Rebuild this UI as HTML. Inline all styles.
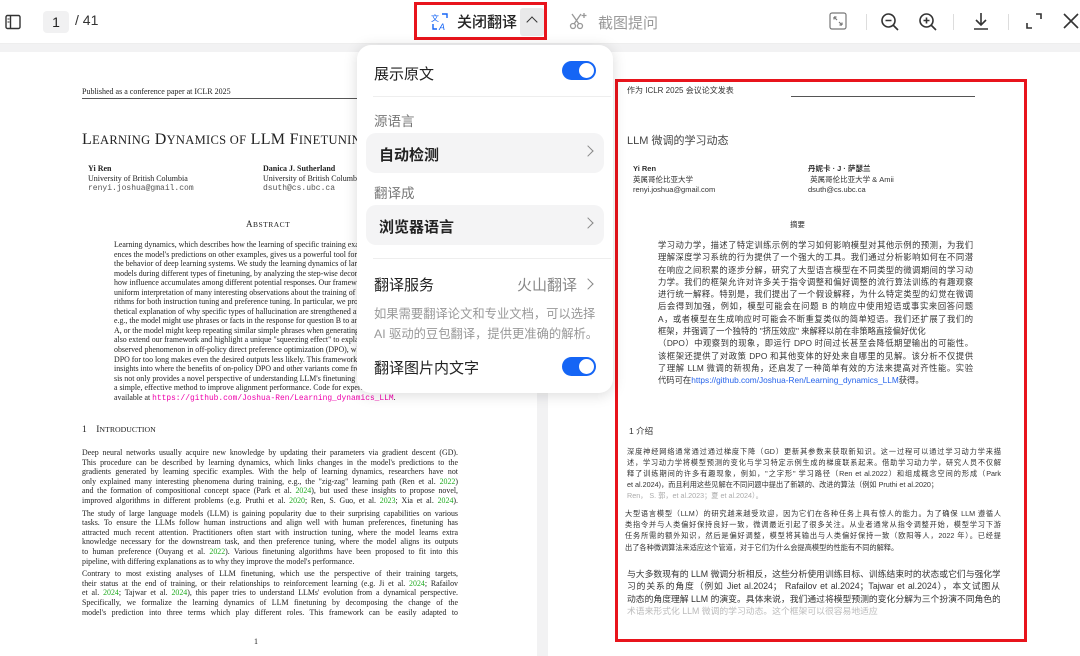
<!DOCTYPE html>
<html><head><meta charset="utf-8">
<style>
*{margin:0;padding:0;box-sizing:border-box}
html{width:1080px;height:656px;overflow:hidden}
body{width:1080px;height:656px;overflow:hidden;background:#f2f2f3;font-family:"Liberation Sans","Noto Sans CJK SC",sans-serif;position:relative;color:#222}
.abs{position:absolute}
.tb{position:absolute;left:0;top:0;width:1080px;height:44px;background:#fff;border-bottom:1px solid #eee}
.pg{position:absolute;background:#fff;overflow:hidden}
.ser{font-family:"Liberation Serif","Noto Serif CJK SC",serif;color:#222}
.mono{font-family:"Liberation Mono",monospace}
.l{position:relative;white-space:nowrap;text-align:justify;text-align-last:justify;overflow:hidden}
.g{color:#2a2}
.pk{color:#e0a}
.cn{font-family:"Liberation Sans","Noto Sans CJK SC",sans-serif;color:#333}
.pop{position:absolute;left:357px;top:45px;width:256px;height:348px;background:#fff;border-radius:14px;box-shadow:0 2px 14px rgba(0,0,0,.15)}
.tog{position:absolute;width:34px;height:19px;border-radius:10px;background:#1565f5}
.tog::after{content:"";position:absolute;right:2px;top:2px;width:15px;height:15px;border-radius:50%;background:#fff}
.row{position:absolute;left:9px;width:238px;height:40px;border-radius:10px;background:#f4f4f5;font-size:15px;font-weight:bold;color:#222;padding:11px 0 0 13px}
.chev{position:absolute;right:12px;top:14px;width:8px;height:8px;border-right:1.5px solid #888;border-top:1.5px solid #888;transform:rotate(45deg)}
</style></head><body>

<div class="tb">
  <svg class="abs" style="left:5px;top:14px" width="16" height="16" viewBox="0 0 16 16"><rect x="1" y="1.5" width="14" height="13" rx="1.5" fill="none" stroke="#333" stroke-width="1.4"/><line x1="5.5" y1="2" x2="5.5" y2="14" stroke="#333" stroke-width="1.4"/><line x1="2.5" y1="5" x2="4.5" y2="5" stroke="#333"/><line x1="2.5" y1="8" x2="4.5" y2="8" stroke="#333"/></svg>
  <div class="abs" style="left:43px;top:11px;width:26px;height:22px;background:#f1f1f2;border-radius:4px;font-size:14px;text-align:center;line-height:22px">1</div>
  <div class="abs" style="left:75px;top:12px;font-size:14px;color:#333">/ 41</div>
  <div class="abs" style="left:414px;top:2px;width:133px;height:38px;border:3px solid #e8141c"></div>
  <svg class="abs" style="left:430px;top:12px" width="20" height="20" viewBox="0 0 20 20"><text x="1" y="9" font-size="8" fill="#1565f5" font-family="Noto Sans CJK SC">文</text><text x="9" y="18" font-size="9" fill="#1565f5" font-family="Liberation Sans" font-style="italic">A</text><path d="M12 2h5v4M3 12v5h4" fill="none" stroke="#1565f5" stroke-width="1.4"/></svg>
  <div class="abs" style="left:457px;top:11px;font-size:15px;color:#222;font-weight:500">关闭翻译</div>
  <div class="abs" style="left:520px;top:8px;width:24px;height:28px;background:#e9e9ea;border-radius:3px"></div>
  <div class="abs" style="left:528px;top:18px;width:8px;height:8px;border-left:1.6px solid #333;border-top:1.6px solid #333;transform:rotate(45deg)"></div>
  <svg class="abs" style="left:568px;top:11px" width="20" height="20" viewBox="0 0 20 20" fill="none" stroke="#999" stroke-width="1.3"><circle cx="5" cy="15" r="2.5"/><circle cx="12" cy="15" r="2.5"/><path d="M6 13L13 3M11 13L4 3"/><path d="M16 2v5M13.5 4.5h5"/></svg>
  <div class="abs" style="left:598px;top:12px;font-size:15px;color:#999">截图提问</div>
  <svg class="abs" style="left:829px;top:12px" width="18" height="18" viewBox="0 0 18 18" fill="none" stroke="#777" stroke-width="1.2"><rect x="1" y="1" width="16" height="16" rx="2"/><path d="M5 5l3 3M5 5v2.5M5 5h2.5M13 13l-3-3M13 13v-2.5M13 13h-2.5"/></svg>
  <div class="abs" style="left:866px;top:14px;width:1px;height:16px;background:#ddd"></div>
  <svg class="abs" style="left:880px;top:12px" width="20" height="20" viewBox="0 0 20 20" fill="none" stroke="#333" stroke-width="1.6"><circle cx="8.5" cy="8.5" r="6.5"/><path d="M13 13l5 5M5.5 8.5h6"/></svg>
  <svg class="abs" style="left:918px;top:12px" width="20" height="20" viewBox="0 0 20 20" fill="none" stroke="#333" stroke-width="1.6"><circle cx="8.5" cy="8.5" r="6.5"/><path d="M13 13l5 5M5.5 8.5h6M8.5 5.5v6"/></svg>
  <div class="abs" style="left:953px;top:14px;width:1px;height:16px;background:#ddd"></div>
  <svg class="abs" style="left:971px;top:11px" width="20" height="20" viewBox="0 0 20 20" fill="none" stroke="#333" stroke-width="1.6"><path d="M10 2v12M5 9l5 5 5-5M3 18h14"/></svg>
  <div class="abs" style="left:1008px;top:14px;width:1px;height:16px;background:#ddd"></div>
  <svg class="abs" style="left:1025px;top:12px" width="18" height="18" viewBox="0 0 18 18" fill="none" stroke="#333" stroke-width="1.6"><path d="M11 2h5v5M2 11v5h5"/></svg>
  <svg class="abs" style="left:1062px;top:12px" width="18" height="18" viewBox="0 0 18 18" fill="none" stroke="#333" stroke-width="1.6"><path d="M2 2l14 14M16 2L2 16"/></svg>
</div>

<!-- left page -->
<div class="pg ser" style="left:0;top:52px;width:537px;height:604px">
  <div class="abs" style="left:82px;top:35px;font-size:8px">Published as a conference paper at ICLR 2025</div>
  <div class="abs" style="left:82px;top:46px;width:300px;height:1px;background:#555"></div>
  <div class="abs" style="left:82px;top:79px;font-size:16px;letter-spacing:.3px;white-space:nowrap">L<span style="font-size:12.5px">EARNING</span> D<span style="font-size:12.5px">YNAMICS OF</span> LLM F<span style="font-size:12.5px">INETUNING</span></div>
  <div class="abs" style="left:88px;top:112px;font-size:8px;line-height:9.6px"><b>Yi Ren</b><br>University of British Columbia<br><span class="mono" style="color:#555">renyi.joshua@gmail.com</span></div>
  <div class="abs" style="left:263px;top:112px;font-size:8px;line-height:9.6px"><b>Danica J. Sutherland</b><br>University of British Columbia<br><span class="mono" style="color:#555">dsuth@cs.ubc.ca</span></div>
  <div class="abs" style="left:246px;top:167px;font-size:9px;letter-spacing:.5px">A<span style="font-size:7.5px">BSTRACT</span></div>
  <div class="abs" style="left:114px;top:188px;font-size:7.9px;line-height:9.55px;width:343px">
    <div style="white-space:nowrap">Learning dynamics, which describes how the learning of specific training examples influ-</div>
    <div style="white-space:nowrap">ences the model's predictions on other examples, gives us a powerful tool for understanding</div>
    <div style="white-space:nowrap">the behavior of deep learning systems. We study the learning dynamics of large language</div>
    <div style="white-space:nowrap">models during different types of finetuning, by analyzing the step-wise decomposition of</div>
    <div style="white-space:nowrap">how influence accumulates among different potential responses. Our framework allows a</div>
    <div style="white-space:nowrap">uniform interpretation of many interesting observations about the training of popular algo-</div>
    <div style="white-space:nowrap">rithms for both instruction tuning and preference tuning. In particular, we propose a hypo-</div>
    <div style="white-space:nowrap">thetical explanation of why specific types of hallucination are strengthened after finetuning,</div>
    <div style="white-space:nowrap">e.g., the model might use phrases or facts in the response for question B to answer question</div>
    <div style="white-space:nowrap">A, or the model might keep repeating similar simple phrases when generating responses. We</div>
    <div style="white-space:nowrap">also extend our framework and highlight a unique "squeezing effect" to explain a previously</div>
    <div style="white-space:nowrap">observed phenomenon in off-policy direct preference optimization (DPO), where running</div>
    <div style="white-space:nowrap">DPO for too long makes even the desired outputs less likely. This framework also provides</div>
    <div style="white-space:nowrap">insights into where the benefits of on-policy DPO and other variants come from. The analy-</div>
    <div style="white-space:nowrap">sis not only provides a novel perspective of understanding LLM's finetuning but also inspires</div>
    <div style="white-space:nowrap">a simple, effective method to improve alignment performance. Code for experiments is</div>
    <div style="white-space:nowrap">available at <span class="mono pk">https://github.com/Joshua-Ren/Learning_dynamics_LLM</span>.</div>
  </div>
  <div class="abs" style="left:82px;top:373px;font-size:9.5px;white-space:nowrap">1&nbsp;&nbsp;&nbsp;&nbsp;I<span style="font-size:7.8px">NTRODUCTION</span></div>
  <div class="abs" style="left:82px;top:396px;width:376px;font-size:7.9px;line-height:9.6px">
    <div class="l">Deep neural networks usually acquire new knowledge by updating their parameters via gradient descent (GD).</div>
    <div class="l">This procedure can be described by learning dynamics, which links changes in the model's predictions to the</div>
    <div class="l">gradients generated by learning specific examples. With the help of learning dynamics, researchers have not</div>
    <div class="l">only explained many interesting phenomena during training, e.g., the "zig-zag" learning path (Ren et al. <span class="g">2022</span>)</div>
    <div class="l">and the formation of compositional concept space (Park et al. <span class="g">2024</span>), but used these insights to propose novel,</div>
    <div class="l">improved algorithms in different problems (e.g. Pruthi et al. <span class="g">2020</span>; Ren, S. Guo, et al. <span class="g">2023</span>; Xia et al. <span class="g">2024</span>).</div>
    <div style="height:3px"></div>
    <div class="l">The study of large language models (LLM) is gaining popularity due to their surprising capabilities on various</div>
    <div class="l">tasks. To ensure the LLMs follow human instructions and align well with human preferences, finetuning has</div>
    <div class="l">attracted much recent attention. Practitioners often start with instruction tuning, where the model learns extra</div>
    <div class="l">knowledge necessary for the downstream task, and then preference tuning, where the model aligns its outputs</div>
    <div class="l">to human preference (Ouyang et al. <span class="g">2022</span>). Various finetuning algorithms have been proposed to fit into this</div>
    <div style="white-space:nowrap">pipeline, with differing explanations as to why they improve the model's performance.</div>
    <div style="height:3px"></div>
    <div class="l">Contrary to most existing analyses of LLM finetuning, which use the perspective of their training targets,</div>
    <div class="l">their status at the end of training, or their relationships to reinforcement learning (e.g. Ji et al. <span class="g">2024</span>; Rafailov</div>
    <div class="l">et al. <span class="g">2024</span>; Tajwar et al. <span class="g">2024</span>), this paper tries to understand LLMs' evolution from a dynamical perspective.</div>
    <div class="l">Specifically, we formalize the learning dynamics of LLM finetuning by decomposing the change of the</div>
    <div class="l">model's prediction into three terms which play different roles. This framework can be easily adapted to</div>
  </div>
  <div class="abs" style="left:254px;top:585px;font-size:8px">1</div>
</div>

<!-- right page -->
<div class="pg" style="left:548px;top:52px;width:532px;height:604px">
  <div class="abs cn" style="left:79px;top:33px;font-size:8px">作为 ICLR 2025 会议论文发表</div>
  <div class="abs" style="left:243px;top:44px;width:184px;height:1px;background:#555"></div>
  <div class="abs cn" style="left:79px;top:80px;font-size:11px;color:#444">LLM 微调的学习动态</div>
  <div class="abs cn" style="left:85px;top:112px;font-size:7.5px;line-height:10.5px"><b>Yi Ren</b><br>英属哥伦比亚大学<br>renyi.joshua@gmail.com</div>
  <div class="abs cn" style="left:260px;top:112px;font-size:7.5px;line-height:10.5px"><b>丹妮卡 · J · 萨瑟兰</b><br>&nbsp;英属哥伦比亚大学 &amp; Amii<br>dsuth@cs.ubc.ca</div>
  <div class="abs cn" style="left:242px;top:167px;font-size:7.5px">摘要</div>
  <div class="abs cn" style="left:110px;top:187px;font-size:8.3px;line-height:12.3px;width:315px">
    <div class="l">学习动力学，描述了特定训练示例的学习如何影响模型对其他示例的预测，为我们</div>
    <div class="l">理解深度学习系统的行为提供了一个强大的工具。我们通过分析影响如何在不同潜</div>
    <div class="l">在响应之间积累的逐步分解，研究了大型语言模型在不同类型的微调期间的学习动</div>
    <div class="l">力学。我们的框架允许对许多关于指令调整和偏好调整的流行算法训练的有趣观察</div>
    <div class="l">进行统一解释。特别是，我们提出了一个假设解释，为什么特定类型的幻觉在微调</div>
    <div class="l">后会得到加强，例如，模型可能会在问题 B 的响应中使用短语或事实来回答问题</div>
    <div class="l">A，或者模型在生成响应时可能会不断重复类似的简单短语。我们还扩展了我们的</div>
    <div style="white-space:nowrap">框架，并强调了一个独特的 "挤压效应" 来解释以前在非策略直接偏好优化</div>
    <div class="l">（DPO）中观察到的现象，即运行 DPO 时间过长甚至会降低期望输出的可能性。</div>
    <div class="l">该框架还提供了对政策 DPO 和其他变体的好处来自哪里的见解。该分析不仅提供</div>
    <div class="l">了理解 LLM 微调的新视角，还启发了一种简单有效的方法来提高对齐性能。实验</div>
    <div style="white-space:nowrap">代码可在<span style="color:#2563eb">https://github.com/Joshua-Ren/Learning_dynamics_LLM</span>获得。</div>
  </div>
  <div class="abs cn" style="left:81px;top:373px;font-size:8.5px">1 介绍</div>
  <div class="abs cn" style="left:79px;top:394px;font-size:7.2px;line-height:11px;width:374px">
    <div class="l">深度神经网络通常通过通过梯度下降（GD）更新其参数来获取新知识。这一过程可以通过学习动力学来描</div>
    <div class="l">述，学习动力学将模型预测的变化与学习特定示例生成的梯度联系起来。借助学习动力学，研究人员不仅解</div>
    <div class="l">释了训练期间的许多有趣现象，例如，"之字形" 学习路径（Ren et al.2022）和组成概念空间的形成（Park</div>
    <div style="white-space:nowrap">et al.2024)，而且利用这些见解在不同问题中提出了新颖的、改进的算法（例如 Pruthi et al.2020；</div>
    <div style="white-space:nowrap;color:#aaa">Ren， S. 郭，et al.2023；夏 et al.2024）。</div>
  </div>
  <div class="abs cn" style="left:77px;top:456px;font-size:7.2px;line-height:11.2px;width:376px">
    <div class="l">大型语言模型（LLM）的研究越来越受欢迎，因为它们在各种任务上具有惊人的能力。为了确保 LLM 遵循人</div>
    <div class="l">类指令并与人类偏好保持良好一致，微调最近引起了很多关注。从业者通常从指令调整开始，模型学习下游</div>
    <div class="l">任务所需的额外知识，然后是偏好调整，模型将其输出与人类偏好保持一致（欧阳等人，2022 年）。已经提</div>
    <div style="white-space:nowrap">出了各种微调算法来适应这个管道，对于它们为什么会提高模型的性能有不同的解释。</div>
  </div>
  <div class="abs cn" style="left:79px;top:516px;font-size:8.8px;line-height:12.4px;width:373px">
    <div class="l">与大多数现有的 LLM 微调分析相反，这些分析使用训练目标、训练结束时的状态或它们与强化学</div>
    <div class="l">习的关系的角度（例如 Jiet al.2024； Rafailov et al.2024；Tajwar et al.2024），本文试图从</div>
    <div class="l">动态的角度理解 LLM 的演变。具体来说，我们通过将模型预测的变化分解为三个扮演不同角色的</div>
    <div style="white-space:nowrap;color:#bbb">术语来形式化 LLM 微调的学习动态。这个框架可以很容易地适应</div>
  </div>
</div>
<div class="abs" style="left:615px;top:79px;width:412px;height:563px;border:3px solid #e8141c"></div>

<!-- popup -->
<div class="pop">
  <div class="abs" style="left:17px;top:18px;font-size:15px;color:#222">展示原文</div>
  <div class="tog" style="left:205px;top:16px"></div>
  <div class="abs" style="left:16px;top:51px;width:238px;height:1px;background:#eee"></div>
  <div class="abs" style="left:17px;top:65px;font-size:13.5px;color:#777">源语言</div>
  <div class="row" style="top:88px">自动检测<span class="chev"></span></div>
  <div class="abs" style="left:17px;top:137px;font-size:13.5px;color:#777">翻译成</div>
  <div class="row" style="top:160px">浏览器语言<span class="chev"></span></div>
  <div class="abs" style="left:16px;top:213px;width:238px;height:1px;background:#eee"></div>
  <div class="abs" style="left:17px;top:229px;font-size:15px;color:#222">翻译服务</div>
  <div class="abs" style="left:160px;top:229px;font-size:15px;color:#888">火山翻译</div>
  <div class="chev" style="right:21px;top:235px"></div>
  <div class="abs" style="left:17px;top:259px;font-size:12.3px;color:#999;line-height:20px;white-space:nowrap">如果需要翻译论文和专业文档，可以选择<br>AI 驱动的豆包翻译，提供更准确的解析。</div>
  <div class="abs" style="left:17px;top:312px;font-size:15px;color:#222">翻译图片内文字</div>
  <div class="tog" style="left:205px;top:312px"></div>
</div>
</body></html>
